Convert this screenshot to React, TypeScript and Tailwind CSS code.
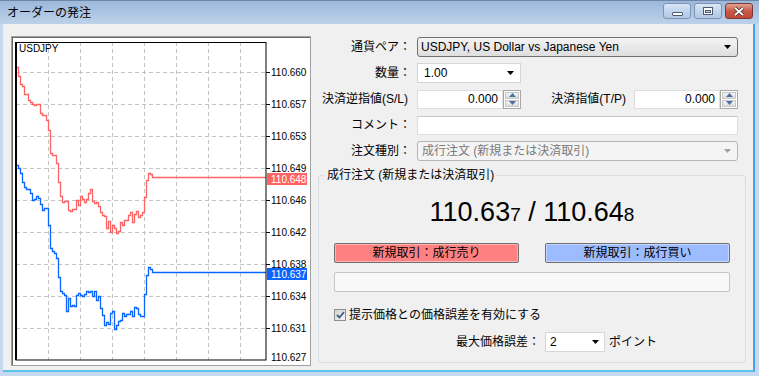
import React from 'react';

// step-line helpers for the tick chart
type Key = [number, number, number];

const redKeys: Key[] = [
  [16, 68, 4], [19, 72, 5], [21, 90, 4], [27, 92, 4], [31, 106, 5], [36, 103, 4],
  [40, 110, 6], [46, 118, 5], [48, 130, 2], [50, 152, 1], [54, 157, 2], [57, 168, 1],
  [59, 195, 1], [62, 199, 3], [64, 207, 8], [72, 210, 10], [76, 202, 4], [86, 198, 6],
  [89, 190, 4], [93, 199, 5], [99, 208, 7], [104, 224, 13], [108, 226, 6], [112, 224, 11],
  [117, 230, 4], [121, 221, 4], [124, 217, 6], [142, 217, 6], [144, 198, 1], [146, 180, 1],
  [148, 173, 1], [151, 174, 2], [153, 179, 0],
];

function rand(x: number, seed: number) {
  const s = Math.sin(x * 12.9898 + seed * 78.233) * 43758.5453;
  return s - Math.floor(s);
}

function stepPath(keys: Key[], seed: number, dy: number) {
  let d = '';
  let x = keys[0][0];
  const end = keys[keys.length - 1][0];
  let i = 0;
  while (x <= end) {
    while (i < keys.length - 2 && keys[i + 1][0] < x) i++;
    const [x0, y0, a0] = keys[i];
    const [x1, y1, a1] = keys[i + 1];
    const t = x1 === x0 ? 0 : Math.min(1, (x - x0) / (x1 - x0));
    const amp = a0 + (a1 - a0) * t;
    const j = Math.round((rand(x, seed) - 0.5) * 2 * amp);
    const y = Math.round(y0 + (y1 - y0) * t + j + dy) + 0.5;
    d += d ? ` H${x + 0.5} V${y}` : `M${x + 0.5} ${y}`;
    x += 2;
  }
  return d + ' H266';
}

const levels: [number, string][] = [
  [72, '110.660'], [104, '110.657'], [136, '110.653'], [168, '110.649'], [200, '110.646'],
  [232, '110.642'], [264, '110.638'], [296, '110.634'], [328, '110.631'],
];

const Chart = () => (
  <svg width="298" height="328" className="block">
    <g transform="translate(-12 -37)">
      {levels.map(([y]) => (
        <line key={y} x1="16" x2="266" y1={y + 0.5} y2={y + 0.5} stroke="#c4c4c4" strokeDasharray="4 3" />
      ))}
      {[48, 80, 112, 144, 176, 208, 240].map((x) => (
        <line key={x} x1={x + 0.5} x2={x + 0.5} y1="42" y2="360" stroke="#c4c4c4" strokeDasharray="4 3" />
      ))}
      <path d={stepPath(redKeys, 1, 0)} fill="none" stroke="#ff6464" strokeWidth="1.3" />
      <path d={stepPath(redKeys, 7, 95)} fill="none" stroke="#0a64ff" strokeWidth="1.3" />
      <rect x="16" y="42.5" width="250" height="317.5" fill="none" stroke="#000" strokeWidth="1" />
      <line x1="16" x2="16" y1="42" y2="360" stroke="#000" strokeWidth="2" />
      {levels.map(([y, t]) => (
        <g key={t}>
          <line x1="266" x2="270" y1={y + 0.5} y2={y + 0.5} stroke="#000" />
          <text x="271" y={y + 4} fontSize="10" fontFamily="Liberation Sans, sans-serif" fill="#000">{t}</text>
        </g>
      ))}
      <text x="271" y="361" fontSize="10" fontFamily="Liberation Sans, sans-serif" fill="#000">110.627</text>
      <rect x="267" y="173" width="40" height="12" fill="#ff6464" />
      <text x="271" y="183" fontSize="10" fontFamily="Liberation Sans, sans-serif" fill="#fff">110.648</text>
      <rect x="267" y="268" width="40" height="12" fill="#0a64ff" />
      <text x="271" y="278" fontSize="10" fontFamily="Liberation Sans, sans-serif" fill="#fff">110.637</text>
      <text x="19" y="52" fontSize="10" fontFamily="Liberation Sans, sans-serif" fill="#000">USDJPY</text>
    </g>
  </svg>
);

const Arrow = ({ color = '#000' }: { color?: string }) => (
  <svg width="7" height="4" viewBox="0 0 7 4" className="shrink-0">
    <path d="M0 0H7L3.5 4Z" fill={color} />
  </svg>
);

const Spinner = () => (
  <div className="w-[18px] h-[19px] border border-[#a8a8a8] flex flex-col bg-white p-[1px] gap-[1px]">
    {[0, 1].map((i) => (
      <div key={i} className="flex-1 flex items-center justify-center bg-linear-to-b from-[#f4f4f4] to-[#dcdcdc] border border-[#c8c8c8]">
        <svg width="7" height="4" viewBox="0 0 7 4">
          <path d={i === 0 ? 'M0 4H7L3.5 0Z' : 'M0 0H7L3.5 4Z'} fill="#4f6fa3" />
        </svg>
      </div>
    ))}
  </div>
);

const Label = ({ children }: { children: React.ReactNode }) => (
  <div className="w-[100px] shrink-0 text-right whitespace-nowrap">{children}</div>
);

const CaptionButton = ({ kind }: { kind: 'min' | 'max' | 'close' }) => {
  if (kind === 'close')
    return (
      <div className="w-[28px] h-[16px] rounded-[3px] border border-[#7a3a32] bg-linear-to-b from-[#e3a391] via-[#c9594a] to-[#c24837] flex items-center justify-center">
        <svg width="12" height="9" viewBox="0 0 12 9">
          <path d="M2 1L10 8M10 1L2 8" stroke="#3b2a2a" strokeWidth="3.2" />
          <path d="M2 1L10 8M10 1L2 8" stroke="#fff" strokeWidth="1.8" />
        </svg>
      </div>
    );
  return (
    <div className="w-[28px] h-[16px] rounded-[3px] border border-[#7d95b5] bg-linear-to-b from-[#dbe7f5] via-[#c2d5ec] to-[#b1c8e4] flex items-center justify-center">
      {kind === 'min' ? (
        <div className="w-[11px] h-[4px] mt-[5px] bg-white border border-[#4a5b73] rounded-[1px]" />
      ) : (
        <div className="w-[10px] h-[8px] border border-[#4a5b73] bg-white flex items-center justify-center">
          <div className="w-[6px] h-[3px] border border-[#4a5b73] bg-[#c6d6ea]" />
        </div>
      )}
    </div>
  );
};

export default function App() {
  return (
    <div className="w-[759px] h-[376px] bg-[#c7d9ee] flex flex-col overflow-hidden font-['Liberation_Sans','Noto_Sans_CJK_JP',sans-serif] text-[12px] leading-[14px] text-black">
      {/* title bar */}
      <div className="h-[24px] shrink-0 flex items-center pl-[7px] pr-[6px] bg-linear-to-b from-[#9cb8db] to-[#bcd2ea] border-t border-[#6d87a8]">
        <div className="flex-1 text-[12px] leading-[14px] mt-[1px]">オーダーの発注</div>
        <div className="flex items-center gap-[3px] mt-[-3px]">
          <CaptionButton kind="min" />
          <CaptionButton kind="max" />
          <CaptionButton kind="close" />
        </div>
      </div>

      {/* client */}
      <div className="flex-1 flex pl-[3px] pr-[4px] pb-[4px]">
        <div className="flex-1 flex bg-[#f0f0f0] pt-[12px] pl-[8px] border-b-2 border-[#5bc2e9] border-r-2 border-r-[#4a9fe6]">
          <div className="w-[300px] h-[330px] shrink-0 bg-white border border-[#a0a0a0] shadow-[inset_1px_1px_0_#6a6a6a]">
            <Chart />
          </div>

          {/* form */}
          <div className="flex-1 flex flex-col pt-[1px]">
            <div className="flex flex-col gap-[6px]">
              <div className="flex items-center h-[20px] gap-[6px]">
                <Label>通貨ペア：</Label>
                <div className="w-[321px] h-[20px] rounded-[3px] border border-[#707070] bg-linear-to-b from-[#f4f4f4] to-[#dedede] flex items-center pl-[3px] pr-[6px]">
                  <span className="flex-1 text-[12px]">USDJPY, US Dollar vs Japanese Yen</span>
                  <Arrow />
                </div>
              </div>

              <div className="flex items-center h-[20px] gap-[6px]">
                <Label>数量：</Label>
                <div className="w-[104px] h-[20px] border border-[#d5d5d5] bg-white flex items-center pl-[6px] pr-[6px]">
                  <span className="flex-1">1.00</span>
                  <Arrow />
                </div>
              </div>

              <div className="flex items-center h-[20px]">
                <div className="w-[97px] shrink-0 text-right whitespace-nowrap">決済逆指値(S/L)</div>
                <div className="w-[86px] h-[19px] ml-[9px] bg-white border border-[#dedede] flex items-center justify-end pr-[4px]">0.000</div>
                <Spinner />
                <div className="w-[105px] shrink-0 text-right whitespace-nowrap">決済指値(T/P)</div>
                <div className="w-[86px] h-[19px] ml-[8px] bg-white border border-[#dedede] flex items-center justify-end pr-[4px]">0.000</div>
                <Spinner />
              </div>

              <div className="flex items-center h-[20px] gap-[6px]">
                <Label>コメント：</Label>
                <div className="w-[321px] h-[19px] bg-white border border-[#dedede] border-t-[#c8c8c8]" />
              </div>

              <div className="flex items-center h-[20px] gap-[6px]">
                <Label>注文種別：</Label>
                <div className="w-[321px] h-[20px] rounded-[3px] border border-[#b5b5b5] bg-[#f4f4f4] flex items-center pl-[4px] pr-[6px] text-[#7a7a7a]">
                  <span className="flex-1">成行注文 (新規または決済取引)</span>
                  <Arrow color="#a0a0a0" />
                </div>
              </div>
            </div>

            {/* group */}
            <fieldset className="ml-[7px] mt-[7px] w-[428px] border border-[#d5dfe5] rounded-[3px] px-[15px] pb-[10px]">
              <legend className="ml-[-9px] px-[2px] leading-[14px]">成行注文 (新規または決済取引)</legend>
              <div className="mt-[15px] h-[30px] flex items-baseline justify-center leading-[30px] text-[27px] font-['Liberation_Sans',sans-serif]">
                <span>110.63</span>
                <span className="text-[19px]">7</span>
                <span>&nbsp;/&nbsp;</span>
                <span>110.64</span>
                <span className="text-[19px]">8</span>
              </div>
              <div className="mt-[16px] flex justify-between">
                <div className="w-[185px] h-[20px] rounded-[2px] border border-[#707070] bg-[#ff8080] shadow-[inset_0_0_0_1px_#ffb0b0] flex items-center justify-center">新規取引：成行売り</div>
                <div className="w-[185px] h-[20px] rounded-[2px] border border-[#707070] bg-[#9dbcff] shadow-[inset_0_0_0_1px_#c6d8ff] flex items-center justify-center">新規取引：成行買い</div>
              </div>
              <div className="mt-[9px] h-[20px] rounded-[2px] border border-[#c6c6c6] bg-[#f8f8f8]" />
              <div className="mt-[16px] h-[14px] flex items-center gap-[3px]">
                <div className="w-[12px] h-[12px] border border-[#8e8f8f] bg-linear-to-br from-[#d4d4d4] to-[#f4f4f4] flex items-center justify-center">
                  <svg width="9" height="8" viewBox="0 0 9 8">
                    <path d="M1 4L3.5 6.5L8 1" fill="none" stroke="#3f5a8c" strokeWidth="1.8" />
                  </svg>
                </div>
                <span>提示価格との価格誤差を有効にする</span>
              </div>
              <div className="mt-[10px] h-[20px] flex items-center pl-[122px]">
                <span className="w-[84px] whitespace-nowrap">最大価格誤差：</span>
                <div className="ml-[5px] w-[60px] h-[20px] bg-white border border-[#d5d5d5] flex items-center pl-[4px] pr-[5px]">
                  <span className="flex-1">2</span>
                  <Arrow />
                </div>
                <span className="ml-[4px]">ポイント</span>
              </div>
            </fieldset>
          </div>
        </div>
      </div>
    </div>
  );
}
